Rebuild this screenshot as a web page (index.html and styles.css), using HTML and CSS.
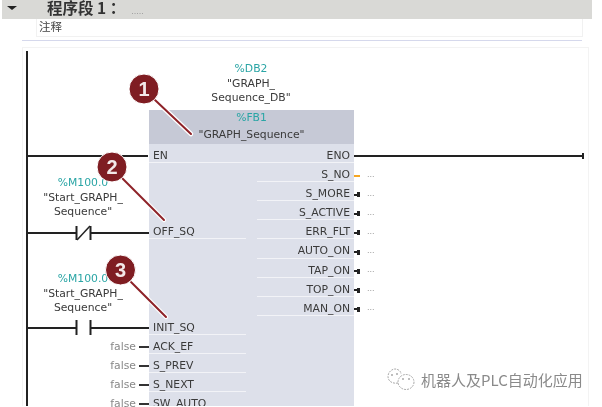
FILE: index.html
```html
<!DOCTYPE html>
<html lang="en">
<head>
    <meta charset="UTF-8">
    <meta name="viewport" content="width=device-width, initial-scale=1.0">
    <title>程序段 1</title>
    <link rel="stylesheet" href="styles.css">
</head>
<body>

<div class="network-header">
    <span class="arrow"></span>
    <span class="network-title">程序段 1 ：</span>
    <span class="network-dots">.....</span>
</div>
<div class="comment">注释</div>
<div class="divider"></div>

<div class="network">
    <!-- power rail and wires -->
    <div class="rail"></div>
    <div class="wire wire-en"></div>
    <div class="wire wire-eno"></div>
    <div class="eno-end"></div>

    <div class="operand op-db">
        <div class="addr">%DB2</div>
        <div>"GRAPH_</div>
        <div>Sequence_DB"</div>
    </div>

    <div class="operand op-m1">
        <div class="addr">%M100.0</div>
        <div>"Start_GRAPH_</div>
        <div>Sequence"</div>
    </div>
    <svg class="contact contact-nc" width="122" height="16" viewBox="0 0 122 16">
        <path d="M0 8H49M64 8H122" stroke="#222" stroke-width="2"/>
        <path d="M49.500 1V15M63.500 1V15" stroke="#222" stroke-width="2"/>
        <path d="M50 15L63 1" stroke="#222" stroke-width="1.500"/>
    </svg>

    <div class="operand op-m2">
        <div class="addr">%M100.0</div>
        <div>"Start_GRAPH_</div>
        <div>Sequence"</div>
    </div>
    <svg class="contact contact-no" width="122" height="16" viewBox="0 0 122 16">
        <path d="M0 8H49M64 8H122" stroke="#222" stroke-width="2"/>
        <path d="M49.500 0V15M63.500 0V15" stroke="#222" stroke-width="2"/>
    </svg>

    <div class="false-list">
        <div class="false-row"><span>false</span><i></i></div>
        <div class="false-row"><span>false</span><i></i></div>
        <div class="false-row"><span>false</span><i></i></div>
        <div class="false-row"><span>false</span><i></i></div>
    </div>

    <!-- function block -->
    <div class="block">
        <div class="block-head">
            <div class="addr">%FB1</div>
            <div>"GRAPH_Sequence"</div>
        </div>
        <div class="block-body">
            <div class="pins">
                <div class="pin pin-wide">EN</div>
                <div class="pin pin-blank"></div>
                <div class="pin pin-blank"></div>
                <div class="pin pin-blank"></div>
                <div class="pin">OFF_SQ</div>
                <div class="pin pin-blank"></div>
                <div class="pin pin-blank"></div>
                <div class="pin pin-blank"></div>
                <div class="pin pin-blank"></div>
                <div class="pin">INIT_SQ</div>
                <div class="pin">ACK_EF</div>
                <div class="pin">S_PREV</div>
                <div class="pin">S_NEXT</div>
                <div class="pin">SW_AUTO</div>
            </div>
            <div class="pins pins-out">
                <div class="pin">ENO</div>
                <div class="pin">S_NO</div>
                <div class="pin">S_MORE</div>
                <div class="pin">S_ACTIVE</div>
                <div class="pin">ERR_FLT</div>
                <div class="pin">AUTO_ON</div>
                <div class="pin">TAP_ON</div>
                <div class="pin">TOP_ON</div>
                <div class="pin">MAN_ON</div>
            </div>
        </div>
    </div>

    <div class="outputs">
        <div class="out-row"></div>
        <div class="out-row"><i class="stub-orange"></i><span>...</span></div>
        <div class="out-row"><i class="stub"></i><span>...</span></div>
        <div class="out-row"><i class="stub"></i><span>...</span></div>
        <div class="out-row"><i class="stub"></i><span>...</span></div>
        <div class="out-row"><i class="stub"></i><span>...</span></div>
        <div class="out-row"><i class="stub"></i><span>...</span></div>
        <div class="out-row"><i class="stub"></i><span>...</span></div>
        <div class="out-row"><i class="stub"></i><span>...</span></div>
    </div>

    <!-- callouts -->
    <svg class="callouts" width="602" height="407" viewBox="0 0 602 407">
        <g fill="none" stroke-linecap="round">
            <path d="M155 100L191 134" stroke="#fff" stroke-width="4.500"/>
            <path d="M155 100L191 134" stroke="#8e2228" stroke-width="2"/>
            <path d="M122 178L164 220" stroke="#fff" stroke-width="4.500"/>
            <path d="M122 178L164 220" stroke="#8e2228" stroke-width="2"/>
            <path d="M131 282L166 317" stroke="#fff" stroke-width="4.500"/>
            <path d="M131 282L166 317" stroke="#8e2228" stroke-width="2"/>
        </g>
        <g fill="#7f1d22" stroke="#fff" stroke-width="1">
            <circle cx="144" cy="89" r="15"/>
            <circle cx="112" cy="167" r="15"/>
            <circle cx="120.500" cy="270" r="15"/>
        </g>
        <g class="callout-num" fill="#f3e9e9" text-anchor="middle">
            <text x="144" y="96">1</text>
            <text x="112" y="174">2</text>
            <text x="120.500" y="277">3</text>
        </g>
    </svg>

    <div class="watermark">
        <svg class="wechat" width="28" height="23" viewBox="0 0 28 23">
            <g fill="none" stroke="#a8a8a8" stroke-width="1" stroke-dasharray="2 1">
                <path d="M11 15C5 16 1 13 1 8.500C1 4 5 1 8 1C11 1 14 3 14 6"/>
                <ellipse cx="19" cy="14" rx="8" ry="7.500"/>
            </g>
            <circle cx="5" cy="7" r="1" fill="#aaa"/>
            <circle cx="10" cy="6" r="1" fill="#aaa"/>
            <circle cx="16" cy="11" r="1" fill="#aaa"/>
            <circle cx="22" cy="11" r="1" fill="#aaa"/>
        </svg>
        <span>机器人及PLC自动化应用</span>
    </div>
</div>

</body>
</html>
```

FILE: styles.css
```css
html, body {
    margin: 0;
    padding: 0;
}
body {
    width: 602px;
    height: 407px;
    overflow: hidden;
    background-color: white;
    font-family: "DejaVu Sans", "Noto Sans CJK SC", sans-serif;
    font-size: 10.800px;
    color: #3a3a3a;
    filter: blur(0.4px);
}
.network-header {
    display: flex;
    align-items: center;
    height: 19px;
    padding-bottom: 4px;
    margin: 0 10px 0 2px;
    background-color: #d9d9d6;
    box-sizing: border-box;
}
.arrow {
    width: 0;
    height: 0;
    margin-left: 5px;
    border-left: 5px solid transparent;
    border-right: 5px solid transparent;
    border-top: 4px solid #222;
}
.network-title {
    margin-left: 30px;
    font-family: "Noto Sans CJK SC", sans-serif;
    font-size: 15.500px;
    font-weight: 700;
    line-height: 15px;
    color: #333;
}
.network-dots {
    margin-left: 6px;
    margin-top: 8px;
    font-size: 8px;
    color: #999;
}
.comment {
    height: 18px;
    margin: 0 19px 0 36px;
    padding-left: 2px;
    border: 1px solid #f1f1f1;
    border-top: none;
    font-family: "Noto Sans CJK SC", sans-serif;
    font-size: 11.500px;
    line-height: 15px;
    color: #444;
    box-sizing: border-box;
}
.divider {
    height: 1px;
    margin: 3px 20px 0 22px;
    background-color: #d5d8ec;
}
.network {
    position: relative;
    height: 359px;
    margin: 6px 13px 0 22px;
    border: 1px solid #f3f3f3;
    border-bottom: none;
    box-sizing: border-box;
}

/* everything below sits on the diagram canvas, coords are relative to .network */
.rail {
    position: absolute;
    left: 3px;
    top: 3px;
    bottom: 0;
    width: 2px;
    background-color: #222;
}
.wire {
    position: absolute;
    height: 2px;
    background-color: #222;
}
.wire-en {
    left: 4px;
    top: 107px;
    width: 121px;
}
.wire-eno {
    left: 331px;
    top: 107px;
    width: 229px;
}
.eno-end {
    position: absolute;
    left: 559px;
    top: 105px;
    width: 2px;
    height: 6px;
    background-color: #222;
}
.operand {
    position: absolute;
    width: 110px;
    text-align: center;
    line-height: 14.500px;
}
.addr {
    color: #2aa5a5;
}
.op-db {
    left: 173px;
    top: 14px;
}
.op-m1 {
    left: 5px;
    top: 128px;
}
.op-m2 {
    left: 5px;
    top: 224px;
}
.contact {
    position: absolute;
    left: 4px;
}
.contact-nc {
    top: 177px;
}
.contact-no {
    top: 272px;
}
.false-list {
    position: absolute;
    right: 439px;
    top: 289px;
}
.false-row {
    display: flex;
    align-items: center;
    justify-content: flex-end;
    height: 19.100px;
    color: #888;
}
.false-row i {
    width: 10px;
    height: 2px;
    margin-left: 3px;
    background-color: #333;
}
.block {
    position: absolute;
    left: 126px;
    top: 62px;
    bottom: 0;
    width: 205px;
    overflow: hidden;
    background-color: #dde0ea;
}
.block-head {
    height: 34px;
    background-color: #c6c9d6;
    text-align: center;
    line-height: 16.500px;
    box-sizing: border-box;
}
.block-body {
    display: flex;
    justify-content: space-between;
}
.pins {
    width: 97px;
}
.pin {
    height: 19.100px;
    padding: 1px 4px 0;
    border-bottom: 1px solid #f2f3f7;
    line-height: 22px;
    box-sizing: border-box;
}
.pin-wide {
    width: 115px;
}
.pin-blank {
    border-bottom: none;
}
.pins-out {
    text-align: right;
}
.outputs {
    position: absolute;
    left: 331px;
    top: 99px;
}
.out-row {
    display: flex;
    align-items: center;
    height: 19.100px;
}
.out-row span {
    margin-left: 7px;
    margin-top: -3px;
    font-size: 8px;
    color: #999;
}
.stub, .stub-orange {
    position: relative;
    display: block;
    width: 6px;
    height: 2px;
    background-color: #222;
}
.stub::after {
    content: "";
    position: absolute;
    left: 3px;
    top: -1.500px;
    width: 3px;
    height: 5px;
    background-color: #222;
}
.stub-orange {
    background-color: #f5a623;
}
.callouts {
    position: absolute;
    left: -23px;
    top: -48px;
}
.callout-num {
    font-family: "Liberation Sans", sans-serif;
    font-size: 20px;
    font-weight: 700;
}
.watermark {
    position: absolute;
    left: 364px;
    top: 320px;
    display: flex;
    align-items: center;
    gap: 6px;
    font-family: "Noto Sans CJK SC", sans-serif;
    font-size: 15px;
    color: #8a8a8a;
}
```
